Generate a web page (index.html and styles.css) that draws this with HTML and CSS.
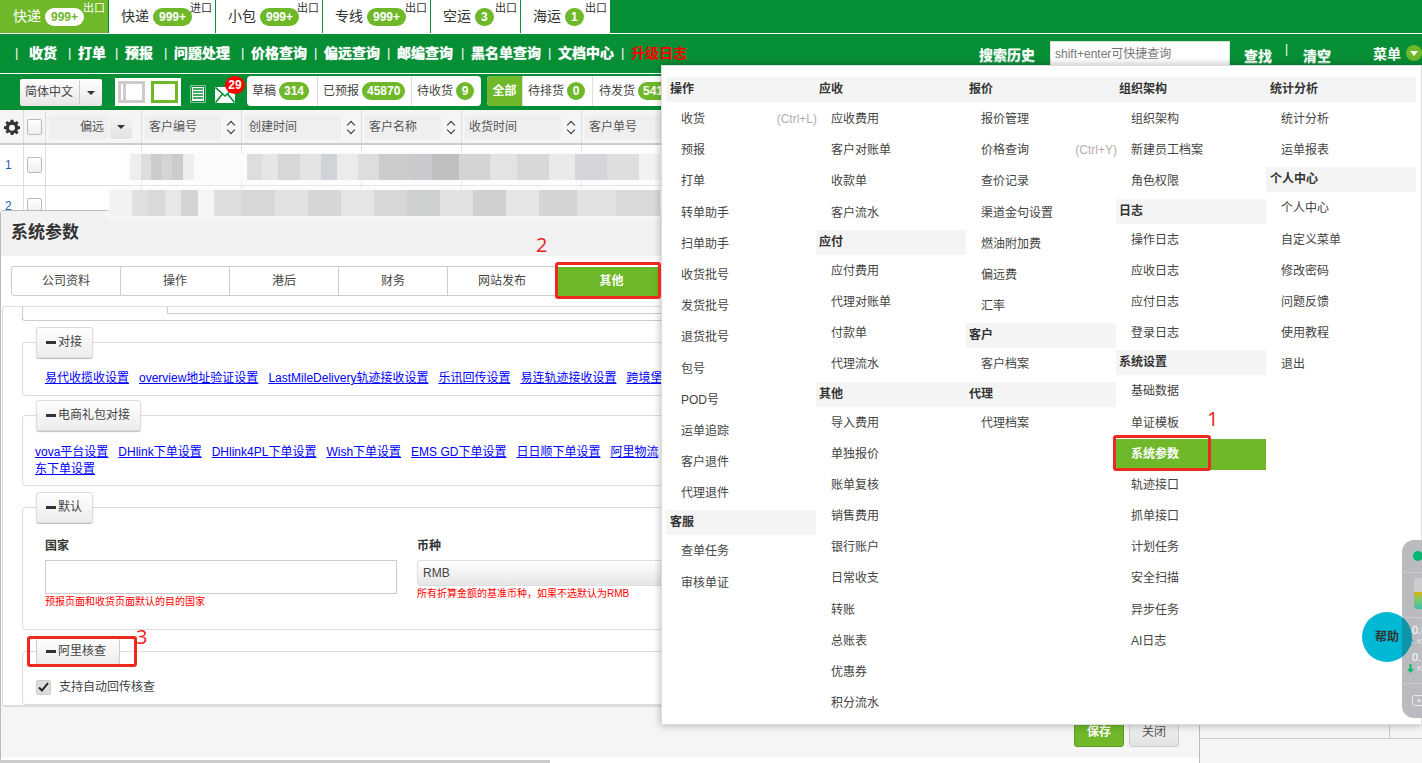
FILE: index.html
```html
<!DOCTYPE html>
<html lang="zh-CN">
<head>
<meta charset="utf-8">
<title>系统参数</title>
<link rel="stylesheet" href="styles.css">
</head>
<body>
<div class="page">
  <div class="tabs">
    <a class="tab active w108"><span>快递</span><b class="pill">999+</b><sup>出口</sup></a>
    <a class="tab w106"><span>快递</span><b class="pill">999+</b><sup>进口</sup></a>
    <a class="tab w106"><span>小包</span><b class="pill">999+</b><sup>出口</sup></a>
    <a class="tab w107"><span>专线</span><b class="pill">999+</b><sup>出口</sup></a>
    <a class="tab w89"><span>空运</span><b class="pill">3</b><sup>出口</sup></a>
    <a class="tab w89"><span>海运</span><b class="pill">1</b><sup>出口</sup></a>
  </div>
  <nav class="nav">
    <div class="nav-links">
      <i>|</i><a class="wide">收货</a><i>|</i><a class="narrow">打单</a><i>|</i><a class="wide">预报</a><i>|</i><a class="wide">问题处理</a><i>|</i><a>价格查询</a><i>|</i><a>偏远查询</a><i>|</i><a class="mid">邮编查询</a><i>|</i><a>黑名单查询</a><i>|</i><a>文档中心</a><i>|</i><a class="red">升级日志</a>
    </div>
    <div class="nav-right">
      <a class="hist">搜索历史</a>
      <input class="search" placeholder="shift+enter可快捷查询">
      <a class="find">查找</a><i class="bar">|</i><a class="clear">清空</a>
      <a class="menu-btn">菜单</a>
      <span class="menu-dot"></span>
    </div>
  </nav>
  <div class="toolbar">
    <div class="lang"><span>简体中文</span><em></em></div>
    <div class="layouts">
      <span class="lay lay-a"><u></u></span>
      <span class="lay lay-b"></span>
    </div>
    <svg class="doc" width="16" height="18" viewBox="0 0 16 18"><rect x="1" y="1" width="14" height="16" fill="#fff" stroke="#fff"/><path d="M3 4h10M3 7h10M3 10h10M3 13h10" stroke="#078f35" stroke-width="1.4"/><path d="M1.500 1.500h13v15h-13z" fill="none" stroke="#078f35"/></svg>
    <span class="mail">
      <svg width="20" height="16" viewBox="0 0 20 16"><rect width="20" height="16" fill="#fff"/><path d="M0.500 0.500L10 9 19.500 .5M.5 15.500L7.500 7M19.500 15.500L12.500 7" fill="none" stroke="#078f35" stroke-width="1.6"/></svg>
      <b class="badge">29</b>
    </span>
    <div class="group">
      <a class="g-item"><span>草稿</span><b class="pill">314</b></a>
      <a class="g-item"><span>已预报</span><b class="pill">45870</b></a>
      <a class="g-item"><span>待收货</span><b class="pill">9</b></a>
    </div>
    <div class="group group2">
      <a class="g-item g-on">全部</a>
      <a class="g-item"><span>待排货</span><b class="pill">0</b></a>
      <a class="g-item"><span>待发货</span><b class="pill">5410</b></a>
    </div>
  </div>
  <div class="thead">
    <div class="c c0"><svg width="16" height="16" viewBox="0 0 24 24"><path fill="#333" fill-rule="evenodd" d="M10 1h4l.6 3.200 1.900.8L19.200 3.100l2.700 2.700L20 8.500l.8 1.900L24 11v4l-3.200.6-.8 1.900 1.900 2.700-2.700 2.700-2.700-1.900-1.900.8L14 24h-4l-.6-3.200-1.900-.8-2.700 1.900-2.700-2.700L4 17.500l-.8-1.900L0 15v-4l3.200-.6.800-1.900-1.900-2.700 2.700-2.700L7.500 5l1.900-.8zM12 8.500a4.500 4.500 0 1 0 0 9 4.500 4.500 0 0 0 0-9z"/></svg></div>
    <div class="c c1"><span class="cb"></span></div>
    <div class="c c2"><span class="fake fake-r">偏远</span><span class="drop"></span></div>
    <div class="c c3"><span class="fake">客户编号</span><span class="sort"></span></div>
    <div class="c c4"><span class="fake">创建时间</span><span class="sort"></span></div>
    <div class="c c5"><span class="fake">客户名称</span><span class="sort"></span></div>
    <div class="c c6"><span class="fake">收货时间</span><span class="sort"></span></div>
    <div class="c c7"><span class="fake">客户单号</span></div>
  </div>
  <div class="tbody">
    <div class="row">
      <div class="c c0 num">1</div><div class="c c1"><span class="cb"></span></div><div class="c c2"></div><div class="c c3"></div><div class="c c4"></div><div class="c c5"></div><div class="c c6"></div><div class="c c7"></div>
      <div class="mosaic m1"></div>
    </div>
    <div class="row">
      <div class="c c0 num">2</div><div class="c c1"><span class="cb"></span></div><div class="c c2"></div><div class="c c3"></div><div class="c c4"></div><div class="c c5"></div><div class="c c6"></div><div class="c c7"></div>
      <div class="mosaic m2"></div>
    </div>
  </div>
  <div class="tfoot"><span class="tf-cell"></span></div>
</div>

<section class="modal">
  <h2 class="m-title">系统参数</h2>
  <div class="m-tabs">
    <a class="m-tab">公司资料</a><a class="m-tab">操作</a><a class="m-tab">港后</a><a class="m-tab">财务</a><a class="m-tab">网站发布</a><a class="m-tab m-on">其他</a>
  </div>
  <div class="m-body">
    <div class="prev"><div class="prev-inner"></div></div>
    <fieldset class="fs fs-a">
      <legend class="lg"><i></i>对接</legend>
      <div class="links pl10">
        <a>易代收揽收设置</a><a>overview地址验证设置</a><a>LastMileDelivery轨迹接收设置</a><a>乐讯回传设置</a><a>易连轨迹接收设置</a><a>跨境堡</a>
      </div>
    </fieldset>
    <fieldset class="fs fs-b">
      <legend class="lg"><i></i>电商礼包对接</legend>
      <div class="links">
        <a>vova平台设置</a><a>DHlink下单设置</a><a>DHlink4PL下单设置</a><a>Wish下单设置</a><a>EMS GD下单设置</a><a>日日顺下单设置</a><a>阿里物流</a><br><a>东下单设置</a>
      </div>
    </fieldset>
    <fieldset class="fs fs-c">
      <legend class="lg"><i></i>默认</legend>
      <div class="form-row">
        <div class="f-col f-l">
          <label>国家</label>
          <input class="f-input">
          <p class="hint">预报页面和收货页面默认的目的国家</p>
        </div>
        <div class="f-col f-r">
          <label>币种</label>
          <div class="f-select">RMB</div>
          <p class="hint">所有折算金额的基准币种，如果不选默认为RMB</p>
        </div>
      </div>
    </fieldset>
    <fieldset class="fs fs-d">
      <legend class="lg lg-d"><i></i>阿里核查</legend>
      <label class="chk"><span class="chk-box"><svg width="11" height="10" viewBox="0 0 11 10"><path d="M1 5.500l3 3L10 1" fill="none" stroke="#222" stroke-width="2"/></svg></span>支持自动回传核查</label>
    </fieldset>
  </div>
  <div class="m-foot">
    <a class="btn btn-save">保存</a><a class="btn btn-close">关闭</a>
  </div>
</section>

<aside class="menu">
  <div class="mcol c-first">
    <h4>操作</h4>
    <a>收货<kbd>(Ctrl+L)</kbd></a><a>预报</a><a>打单</a><a>转单助手</a><a>扫单助手</a><a>收货批号</a><a>发货批号</a><a>退货批号</a><a>包号</a><a>POD号</a><a>运单追踪</a><a>客户退件</a><a>代理退件</a>
    <h4>客服</h4>
    <a>查单任务</a><a>审核单证</a>
  </div>
  <div class="mcol">
    <h4 class="nobg">应收</h4>
    <a>应收费用</a><a>客户对账单</a><a>收款单</a><a>客户流水</a>
    <h4>应付</h4>
    <a>应付费用</a><a>代理对账单</a><a>付款单</a><a>代理流水</a>
    <h4 class="nobg">其他</h4>
    <a>导入费用</a><a>单独报价</a><a>账单复核</a><a>销售费用</a><a>银行账户</a><a>日常收支</a><a>转账</a><a>总账表</a><a>优惠券</a><a>积分流水</a>
  </div>
  <div class="mcol">
    <h4>报价</h4>
    <a>报价管理</a><a>价格查询<kbd>(Ctrl+Y)</kbd></a><a>查价记录</a><a>渠道金句设置</a><a>燃油附加费</a><a>偏远费</a><a>汇率</a>
    <h4>客户</h4>
    <a>客户档案</a>
    <h4>代理</h4>
    <a>代理档案</a>
  </div>
  <div class="mcol">
    <h4>组织架构</h4>
    <a>组织架构</a><a>新建员工档案</a><a>角色权限</a>
    <h4>日志</h4>
    <a>操作日志</a><a>应收日志</a><a>应付日志</a><a>登录日志</a>
    <h4>系统设置</h4>
    <a>基础数据</a><a>单证模板</a><a class="on">系统参数</a><a>轨迹接口</a><a>抓单接口</a><a>计划任务</a><a>安全扫描</a><a>异步任务</a><a>AI日志</a>
  </div>
  <div class="mcol c-last">
    <h4>统计分析</h4>
    <a>统计分析</a><a>运单报表</a>
    <h4>个人中心</h4>
    <a>个人中心</a><a>自定义菜单</a><a>修改密码</a><a>问题反馈</a><a>使用教程</a><a>退出</a>
  </div>
</aside>

<div class="mark mark1"></div><span class="num-note n1">1</span>
<div class="mark mark2"></div><span class="num-note n2">2</span>
<div class="mark mark3"></div><span class="num-note n3">3</span>

<a class="help">帮助</a>
<div class="widget">
  <span class="w-dot"></span>
  <span class="w-meter"></span>
  <span class="w-l l1"></span><span class="w-l l2"></span><span class="w-l l3"></span>
  <svg class="w-up" width="7" height="9" viewBox="0 0 7 9"><path d="M3.500 0L7 4H4.500v5h-2V4H0z" fill="#2aa6f0"/></svg>
  <svg class="w-down" width="7" height="9" viewBox="0 0 7 9"><path d="M3.500 9L7 5H4.500V0h-2v5H0z" fill="#00b870"/></svg>
  <svg class="w-cam" width="14" height="13" viewBox="0 0 14 13"><rect x=".5" y="2.500" width="13" height="10" rx="2" fill="none" stroke="#e8e8e8"/><circle cx="7" cy="7.500" r="1.500" fill="#e8e8e8"/></svg>
</div>
<span class="w-t w-t1">0.0</span><span class="w-t w-k1">K</span>
<span class="w-t w-t2">0.1</span><span class="w-t w-k2">K</span>
</body>
</html>
```

FILE: styles.css
```css
* { box-sizing: border-box; }
html, body { margin: 0; height: 763px; overflow: hidden; }
body { font: 12px/1.4 "Liberation Sans", "Noto Sans CJK SC", sans-serif; color: #333; background: #f5f5f5; position: relative; }
a { text-decoration: none; color: inherit; }
i, em { font-style: normal; }

.page { height: 763px; display: flex; flex-direction: column; }

/* top tabs */
.tabs { height: 34px; flex: none; display: flex; gap: 1px; background: #078f35; border-bottom: 1px solid #fff; }
.tab { height: 33px; background: #fff; display: flex; align-items: center; padding-left: 12px; position: relative; font-size: 14px; color: #333; }
.tab > span { margin-right: 4px; }
.tab sup { position: absolute; right: 3px; top: 1px; font-size: 11px; line-height: 14px; color: #333; }
.tab.active { background: #6fb82a; color: #fff; padding-left: 13px; }
.tab.active sup { color: #fff; }
.w108 { width: 108px; }
.w106 { width: 106px; }
.w107 { width: 107px; }
.w89 { width: 89px; }
.pill { display: inline-block; min-width: 18px; height: 18px; line-height: 18px; padding: 0 6px; border-radius: 9px; background: #6fb82a; color: #fff; font-size: 12px; font-weight: 700; text-align: center; }
.tab.active .pill { background: #fff; color: #6fb82a; }

/* nav */
.nav { height: 40px; flex: none; background: #078f35; border-bottom: 1px solid #fff; display: flex; justify-content: space-between; color: #fff; font-size: 14px; font-weight: 700; }
.nav-links { display: flex; align-items: center; padding: 0 0 0 15px; height: 39px; }
.nav-links a { text-shadow: 0 0 1px #fff; }
.nav-links a.wide { margin-right: 4px; }
.nav-links a.narrow { margin-right: 2px; }
.nav-links a.mid { margin-right: 1px; }
.nav-links i { font-weight: 400; font-size: 13px; width: 4px; margin: 0 6px 0 7px; }
.nav-links i:first-child { margin-left: 0; margin-right: 10px; }
.nav-links .red { color: #f00; text-shadow: none; }
.nav-right { display: flex; align-items: flex-start; padding-top: 7px; position: relative; width: 443px; }
.hist { margin: 5px 15px 0 0; width: 56px; }
.hist, .find, .clear { text-shadow: 0 1px 1px rgba(255, 255, 255, .55); }
.search { width: 180px; height: 25px; border: 1px solid #ddd; padding: 0 4px; font: 12px "Liberation Sans", "Noto Sans CJK SC", sans-serif; background: #fff; }
.search::placeholder { color: #777; }
.find { margin: 6px 0 0 14px; }
.bar { font-weight: 400; font-size: 12px; margin: 0 15px 0 13px; }
.clear { margin-top: 6px; }
.menu-btn { margin: 4px 0 0 42px; }
.menu-dot { width: 16px; height: 16px; border-radius: 50%; background: #6fb82a; margin: 4px 0 0 5px; position: relative; }
.menu-dot::after { content: ""; position: absolute; left: 4px; top: 6px; border: 4px solid transparent; border-top: 5px solid #fff; border-bottom: 0; }

/* toolbar */
.toolbar { height: 36px; flex: none; background: #078f35; display: flex; align-items: flex-start; padding: 2px 0 0 20px; }
.lang { width: 82px; height: 27px; margin-top: 3px; background: linear-gradient(#fff, #e6e6e6); display: flex; align-items: center; padding-left: 5px; color: #444; border-radius: 2px; }
.lang span { flex: 1; }
.lang em { width: 23px; height: 27px; border-left: 1px solid #ccc; position: relative; border-radius: 3px; }
.lang em::after { content: ""; position: absolute; left: 7px; top: 12px; border: 4px solid transparent; border-top-color: #333; border-bottom: 0; }
.layouts { width: 66px; height: 28px; margin: 2px 0 0 13px; background: #fff; display: flex; padding: 3px; gap: 6px; }
.lay { width: 27px; height: 22px; border: 3px solid #ccc; display: block; }
.lay-a u { display: block; width: 3px; height: 16px; background: #ccc; margin-left: 2px; }
.lay-b { border-color: #6fb82a; }
.doc { margin: 9px 0 0 9px; }
.mail { position: relative; margin: 11px 0 0 9px; width: 20px; height: 16px; }
.badge { position: absolute; left: 10px; top: -11px; width: 20px; height: 18px; border-radius: 50%; background: #f00; color: #fff; font-size: 12px; line-height: 18px; text-align: center; }
.group { margin-left: 12px; height: 30px; background: #fff; border-radius: 4px; display: flex; width: 234px; color: #444; flex: none; }
.g-item { display: flex; align-items: center; gap: 3px; padding: 0 5px; border-left: 1px solid #ddd; white-space: nowrap; }
.g-item:first-child { border-left: 0; }
.group .g-item:nth-child(1) { width: 70px; }
.group .g-item:nth-child(2) { width: 94px; }
.group .pill { padding: 0 5px; }
.group2 { margin-left: 6px; width: 220px; overflow: hidden; }
.group2 .g-item:nth-child(1) { width: 35px; }
.group2 .g-item:nth-child(2) { width: 70px; }
.g-on { background: #6fb82a; color: #fff; font-weight: 700; justify-content: center; padding: 0; border-radius: 4px 0 0 4px; }
.group2 .g-item:nth-child(3) { flex: none; padding-left: 6px; }

/* table */
.thead { height: 35px; flex: none; background: #f5f5f5; display: flex; border-bottom: 2px solid #ccc; }
.row { height: 41px; display: flex; background: #fff; border-bottom: 1px solid #ddd; position: relative; }
.c { height: 100%; border-right: 1px solid #ddd; display: flex; align-items: center; flex: none; }
.c0 { width: 24px; justify-content: center; }
.c1 { width: 22px; justify-content: center; }
.c2 { width: 96px; padding: 0 9px 0 3px; }
.c3 { width: 100px; padding-left: 3px; }
.c4 { width: 120px; padding-left: 3px; }
.c5 { width: 100px; padding-left: 3px; }
.c6 { width: 120px; padding-left: 3px; }
.c7 { flex: 1; padding-left: 3px; border-right: 0; }
.cb { width: 15px; height: 16px; border: 1px solid #bbb; border-radius: 2px; background: linear-gradient(#fff, #eee); }
.fake { flex: 1; height: 24px; line-height: 24px; padding-left: 4px; background: #efefef; color: #555; white-space: nowrap; }
.fake-r { text-align: right; padding-right: 4px; }
.drop { width: 22px; height: 24px; margin-left: 2px; background: linear-gradient(#f5f5f5, #e2e2e2); position: relative; border-radius: 3px; flex: none; }
.drop::after { content: ""; position: absolute; left: 7px; top: 10px; border: 4px solid transparent; border-top-color: #333; border-bottom: 0; }
.sort { width: 20px; height: 24px; position: relative; flex: none; }
.sort::before { content: ""; position: absolute; left: 7px; top: 7px; width: 5px; height: 5px; border-left: 1px solid #333; border-top: 1px solid #333; transform: rotate(45deg); }
.sort::after { content: ""; position: absolute; left: 7px; top: 12px; width: 5px; height: 5px; border-right: 1px solid #333; border-bottom: 1px solid #333; transform: rotate(45deg); }
.num { color: #2a5db0; justify-content: flex-start; padding-left: 5px; }
.tbody { flex: 1; background: #f5f5f5; }
.mosaic { position: absolute; height: 26px; filter: blur(.7px); box-shadow: 0 0 5px 2px #fafafa; }
.m1 { left: 130px; right: 762px; top: 9px; background: linear-gradient(90deg, #eee 0 2%, #ddd 2% 4%, #ccc 4% 6%, #d5d5d5 6% 8%, #ccc 8% 10%, #eee 10% 12%, #fbfbfb 12% 22%, #ddd 22% 25%, #e6e6e6 25% 28%, #d7d7d7 28% 32%, #e4e4e4 32% 36%, #d0d3d8 36% 39%, #ebebeb 39% 43%, #ddd 43% 47%, #ccc 47% 53%, #c8cad0 53% 57%, #c0c0c0 57% 62%, #d4d4d4 62% 68%, #e3e3e3 68% 73%, #d8d8d8 73% 79%, #eaeaea 79% 84%, #d4d6dc 84% 90%, #dedede 90% 96%, #f2f2f2 96% 100%); }
.m2 { left: 110px; right: 762px; top: 4px; z-index: 1; background: linear-gradient(90deg, #f2f2f2 0 4%, #e0e0e0 4% 7%, #d9d9d9 7% 10%, #e7e7e7 10% 13%, #d4d4d4 13% 16%, #f5f5f5 16% 19%, #ddd 19% 24%, #d7d7d7 24% 30%, #e2e2e2 30% 36%, #d4d7d4 36% 42%, #e5e5e5 42% 48%, #d8d8d8 48% 54%, #cdd1d1 54% 60%, #e2e2e2 60% 66%, #d0d0d0 66% 72%, #e6e6e6 72% 78%, #d4d4d4 78% 85%, #e2e2e2 85% 92%, #d9d9d9 92% 100%); }
.tfoot { height: 24px; flex: none; border-bottom: 1px solid #ccc; padding-left: 1389px; margin-bottom: 24px; }
.tf-cell { display: block; height: 100%; border-left: 1px solid #ccc; }

/* modal */
.modal { position: absolute; left: 0; top: 210px; width: 1200px; height: 553px; background: #fff; border: 1px solid #bbb; border-bottom: 0; display: flex; flex-direction: column; border-radius: 4px 4px 0 0; }
.m-title { margin: 0; height: 45px; flex: none; background: #f2f2f2; padding: 9px 0 0 10px; font-size: 17px; line-height: 26px; font-weight: 700; color: #333; }
.m-tabs { margin: 10px 0 0 10px; height: 30px; flex: none; display: flex; width: 648px; }
.m-tab { width: 109px; height: 30px; line-height: 28px; text-align: center; border: 1px solid #ccc; border-left: 0; color: #444; background: #fff; flex: none; }
.m-tab:first-child { border-left: 1px solid #ccc; border-radius: 3px 0 0 3px; width: 110px; }
.m-on { background: #6fb82a; color: #fff; font-weight: 700; width: 103px; border: 0; border-top: 1px solid #fff; padding-left: 4px; margin-left: 1px; }
.m-body { margin: 10px 0 0 1px; flex: none; height: 401px; border: 1px solid #ddd; border-bottom: 2px solid #ddd; border-right: 0; border-radius: 3px 0 0 3px; padding: 0 0 0 19px; overflow: hidden; }
.prev { height: 14px; border: 1px solid #ccc; border-top: 0; border-right: 0; border-radius: 0 0 0 3px; padding-left: 144px; }
.prev-inner { height: 7px; border: 1px solid #ccc; border-top: 0; border-right: 0; }
.fs { margin: 0; border: 1px solid #ddd; border-right: 0; border-radius: 4px 0 0 4px; padding: 0; min-width: 0; position: relative; }
.lg { margin-left: 13px; padding: 0 10px 0 9px; height: 31px; line-height: 29px; border: 1px solid #ddd; border-radius: 3px; background: linear-gradient(#fff, #ececec); box-shadow: 0 1px 1px #bbb; font-size: 12px; color: #444; white-space: nowrap; display: flex; align-items: center; gap: 2px; }
.lg i { display: block; width: 10px; height: 3px; background: #333; }
.lg-d { height: 27px; padding-right: 13px; box-shadow: none; border-color: #ccc; border-top: 0; }
.fs-a { margin-top: 6px; height: 69px; }
.fs-b { margin-top: 4px; height: 86px; }
.fs-c { margin-top: 6px; height: 138px; }
.fs-d { margin-top: 8px; height: 67px; }
.links { font-size: 12px; line-height: 17px; padding: 13px 0 0 12px; white-space: nowrap; color: #00f; }
.links a { text-decoration: underline; margin-right: 10px; }
.pl10 { padding: 12px 0 0 22px; }
.form-row { display: flex; padding: 15px 0 0 22px; }
.f-col label { display: block; font-weight: 700; color: #333; line-height: 16px; height: 22px; }
.f-l { width: 372px; }
.f-r { flex: 1; }
.f-input { display: block; width: 352px; height: 34px; border: 1px solid #ccc; background: #fff; }
.f-select { height: 26px; line-height: 24px; padding-left: 5px; border: 1px solid #ddd; border-radius: 3px 0 0 3px; background: linear-gradient(#fff, #e6e6e6); color: #444; }
.hint { margin: 1px 0 0; font-size: 10px; line-height: 14px; color: #f00; white-space: nowrap; }
.chk { display: flex; align-items: center; gap: 8px; margin: 14px 0 0 13px; color: #444; }
.chk-box { width: 15px; height: 15px; background: #ddd; border: 1px solid #ccc; border-radius: 2px; display: flex; align-items: center; justify-content: center; }
.m-foot { flex: none; height: 50px; background: #f5f5f5; display: flex; justify-content: flex-end; gap: 5px; padding: 10px 20px 0 0; }
.btn { width: 50px; height: 30px; line-height: 28px; border-radius: 3px; text-align: center; font-weight: 700; }
.btn-save { background: #6fb82a; color: #fff; border: 1px solid #5d9c22; }
.btn-close { background: linear-gradient(#f5f5f5, #e2e2e2); border: 1px solid #ccc; color: #555; font-weight: 400; }
.modal::after { content: ""; position: absolute; left: -1px; bottom: 0; width: 550px; height: 3px; background: #ccc; }
.modal::before { content: ""; position: absolute; left: 549px; right: 0; bottom: 0; height: 6px; background: #fff; }

/* menu */
.menu { position: absolute; z-index: 2; left: 661px; top: 65px; right: 0; height: 660px; background: #fff; border: 1px solid #ddd; box-shadow: 0 0 8px rgba(0,0,0,.3); display: flex; padding: 11px 0 0 4px; }
.mcol { width: 150px; flex: none; position: relative; }
.mcol h4 { margin: 1px 0 1px; height: 25px; line-height: 24px; padding-left: 3px; font-size: 12px; font-weight: 700; color: #333; background: #f4f4f4; }
.c-first h4, .c-last h4 { padding-left: 4px; }
.mcol h4:first-child { margin-top: 0; margin-bottom: 2px; }
.mcol > a { display: block; height: 31.2px; line-height: 31px; padding-left: 15px; color: #444; position: relative; }
.mcol > a.on { background: #6fb82a; color: #fff; font-weight: 700; }
.mcol kbd { position: absolute; right: -1px; top: 0; font: 12px "Liberation Sans", sans-serif; line-height: 31px; color: #b8aaaa; }

/* annotations */
.mark { position: absolute; z-index: 3; border: 3px solid #ee2a20; border-radius: 3px; }
.mark1 { left: 1113px; top: 435px; width: 98px; height: 36px; }
.mark2 { left: 555px; top: 262px; width: 106px; height: 37px; }
.mark3 { left: 27px; top: 636px; width: 110px; height: 31px; }
.num-note { position: absolute; z-index: 3; color: #f0201a; font: 20px/22px "Open Sans", sans-serif; }
.n1 { left: 1207px; top: 408px; }
.n2 { left: 536px; top: 234px; }
.n3 { left: 136px; top: 626px; }

/* floating */
.widget { position: absolute; z-index: 3; left: 1402px; top: 540px; width: 40px; height: 178px; background: #b9bbbe; border-radius: 12px 0 0 12px; overflow: hidden; }
.w-dot { position: absolute; left: 11px; top: 11px; width: 10px; height: 10px; border-radius: 50%; background: #00b870; }
.w-meter { position: absolute; left: 12px; top: 38px; width: 12px; height: 31px; background: linear-gradient(#ccc 0 14px, #d9b20c 14px, #7fc76e 70%, #3cc0b0); border-radius: 3px; }
.w-t { position: absolute; z-index: 5; left: 1412px; color: #fff; font-size: 11px; line-height: 12px; }
.w-t1 { top: 624px; }
.w-k1 { left: 1417px; top: 636px; font-size: 8px; color: #e8e8e8; }
.w-t2 { top: 651px; }
.w-k2 { left: 1417px; top: 663px; font-size: 8px; color: #e8e8e8; }
.w-up { position: absolute; left: 5px; top: 97px; }
.w-down { position: absolute; left: 5px; top: 124px; }
.w-cam { position: absolute; left: 10px; top: 153px; }
.w-l { position: absolute; left: 0; right: 0; height: 1px; background: #c8cacc; }
.l1 { top: 32px; }
.l2 { top: 77px; }
.l3 { top: 143px; }
.help { position: absolute; z-index: 4; left: 1362px; top: 612px; width: 50px; height: 50px; border-radius: 50%; background: linear-gradient(90deg, #00b8d4 80%, #0e93a8 80%); color: #333; font-size: 12px; font-weight: 700; line-height: 50px; text-align: center; }
```
